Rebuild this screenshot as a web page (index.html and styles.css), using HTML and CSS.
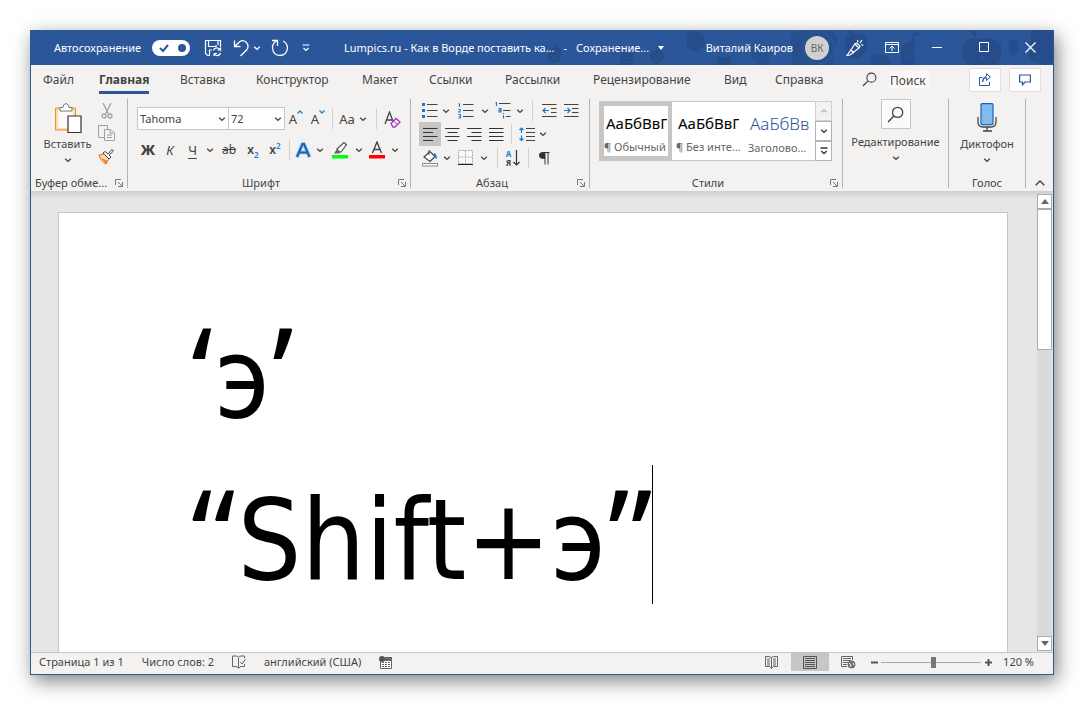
FILE: index.html
```html
<!DOCTYPE html>
<html lang="ru">
<head>
<meta charset="utf-8">
<title>Lumpics.ru - Word</title>
<link rel="stylesheet" href="styles.css">
</head>
<body>
<svg class="defs" width="0" height="0" aria-hidden="true">
  <symbol id="chev" viewBox="0 0 8 8"><path d="M1.2 2.8 4 5.4 6.8 2.8" fill="none" stroke="currentColor" stroke-width="1.4"/></symbol>
  <symbol id="launch" viewBox="0 0 8 8"><path d="M.5 6V.5H6M3 3l4 4M7.5 3v4.500H3" fill="none" stroke="currentColor"/></symbol>
  <symbol id="glass" viewBox="0 0 16 16"><circle cx="10" cy="6" r="4.800" fill="none" stroke="currentColor" stroke-width="1.200"/><path d="M6.500 9.500 1 15" stroke="currentColor" stroke-width="1.400"/></symbol>
</svg>
<div class="window">
  <header class="titlebar">
    <svg class="pattern" width="510" height="35" viewBox="544 30 510 35" aria-hidden="true">
      <g fill="#264d89">
        <path d="M654 50q4-4 10-1" fill="none"/>
        <path d="M552 50q4-4 10-1 2 10-3 13-5 2-9 0-4-6 2-12zM556 48l1-4 3-1-2 5zM622 52l13 2-2 11h-13z"/>
        <circle cx="658" cy="56" r="7"/><path d="M688 34l4-3 12 2 2 12-8 8-10-5zM718 57h14v8h-14z"/>
        <path d="M754 48q1-4 10-4 10 1 10 8-4 4-4 8-2 5-8 5-9-1-9-9z" opacity=".7"/>
        <path d="M793 34q5-4 15-3h22q10 2 8 12-2 5-4 7v15h-40q-2-10-1-16-3-8 0-15z" opacity=".8"/>
        <path d="M851 35q8-3 14 0 6 6 1 18-5 7-9 6-10 2-11-12-1-9 5-12zM857 34q-5-5-9-3 1 4 9 3z"/>
        <path d="M871 59q4-6 13-4 8 1 7 10h-19z"/>
        <path d="M902 46l13-3 1 22h-14zM905 43l12-3v3l-12 3zM912 42l3-10 8 2-1 2-5-1-3 7z"/>
        <path d="M964 44q4-7 17-5 16-3 21 5 2 15-4 21h-30q-6-9-4-21zM976 38q-1-5-8-8h7q3 4 3 8z"/>
        <path d="M1032 30h22v32l-9 3-15-5zM1009 42q5-5 10-1v12l-7 3z"/>
      </g>
      <g fill="none" stroke="#2b579a" stroke-width="1.300"><path d="M554 55v1m5-1v1m-4 2q2 1 3 0M625 58l3 1m2-1l3 1m-7 3h3M654 56h2m4 0h2m-6 3q2 2 4 0M976 52h3m9 0h3m-10 4q2 4 5 0M905 58l3-2m3 3l2-2"/><circle cx="819" cy="48" r="16"/><path d="M1035 51l3-3m4 6l3-2m-6 5l3 1"/></g>
    </svg>
    <label class="autosave"><span>Автосохранение</span>
      <span class="toggle"><input type="checkbox" checked>
        <svg width="38" height="16" viewBox="0 0 38 16"><path d="M8 8l3 3 5-6" fill="none" stroke="#2b579a" stroke-width="2"/><circle cx="30" cy="8" r="4" fill="#2b579a"/></svg></span>
    </label>
    <div class="quick">
      <button aria-label="Сохранить"><svg width="18" height="18" viewBox="0 0 18 18" fill="none" stroke="#fff" stroke-width="1.200"><path d="M6 16.500H3.500L1.500 14.500V1.500h15V8M4.500 2v5.500H12V6M14 2v4M5.500 16v-5H8M9.500 11.500q1-3 4-2.500 2 .5 3 2V8.500m0 2.500h-3M16.500 14q-1 3-4 2.500-2-.5-2.500-2V17m0-2.500h3"/></svg></button>
      <button aria-label="Отменить"><svg width="17" height="18" viewBox="0 0 17 18" fill="none" stroke="#fff" stroke-width="1.300"><path d="M2.500 1.500v6h6M2.500 7.500 8 2.500Q11 .5 14 3q3.500 3.500 1 7.500L8.500 17"/></svg></button>
      <button aria-label="Список отмены"><svg width="8" height="8"><use href="#chev"/></svg></button>
      <button aria-label="Повторить"><svg width="18" height="18" viewBox="0 0 18 18" fill="none" stroke="#fff" stroke-width="1.300"><path d="M1 1.500h5.500V7M6.500 1.500Q1 4 1.500 9.500 2.500 16.500 9 16.500q7-.5 7.500-7.500-.2-5-4.500-7"/></svg></button>
      <button aria-label="Настройка панели"><svg width="8" height="8" viewBox="0 0 8 8" fill="none" stroke="#fff" stroke-width="1.200"><path d="M.5 1h7M1.500 4 4 6.500 6.500 4"/></svg></button>
    </div>
    <button class="doctitle"><span>Lumpics.ru - Как в Ворде поставить ка...</span><span>-</span><span>Сохранение...</span><svg width="6" height="4"><path d="M0 0h6L3 4z" fill="#fff"/></svg></button>
    <div class="account"><span>Виталий Каиров</span><span class="avatar">ВК</span></div>
    <div class="sysbuttons">
      <button aria-label="Перо"><svg width="18" height="18" viewBox="0 0 18 18" fill="none" stroke="#fff" stroke-width="1.200"><path d="M1 16.500 9 5l4 4-9 7-3 .5zM5 11l3 3M9 5l2-1 3 3-1 2M12 3l-.5-2M14 4l2-3M15 6l2.500 0"/></svg></button>
      <button aria-label="Параметры ленты"><svg width="14" height="12" viewBox="0 0 14 12" fill="none" stroke="#fff"><path d="M.5.5h13v10H.5zM.5 2.500h13M7 9V4.500M4.500 6.500 7 4l2.500 2.500"/></svg></button>
      <button aria-label="Свернуть"><svg width="11" height="11" viewBox="0 0 11 11"><path d="M0 5.500h10" stroke="#fff"/></svg></button>
      <button aria-label="Развернуть"><svg width="11" height="11" viewBox="0 0 11 11"><path d="M.5.5h9v9h-9z" fill="none" stroke="#fff"/></svg></button>
      <button aria-label="Закрыть"><svg width="11" height="11" viewBox="0 0 11 11"><path d="M.5.5l10 10m0-10-10 10" stroke="#fff" stroke-width="1.200"/></svg></button>
    </div>
  </header>

  <nav class="tabs">
    <div class="tablist">
      <button>Файл</button><button class="active">Главная</button><button>Вставка</button><button>Конструктор</button><button>Макет</button><button>Ссылки</button><button>Рассылки</button><button>Рецензирование</button><button>Вид</button><button>Справка</button>
    </div>
    <label class="search"><svg width="15" height="15"><use href="#glass"/></svg><input type="text" value="Поиск" aria-label="Поиск"></label>
    <div class="share">
      <button aria-label="Поделиться"><svg width="12" height="13" viewBox="0 0 12 13" fill="none" stroke="#2b579a"><path d="M3.500 4.500h-3v8h10V9M3.500 9q0-4 4-4.500V7.500l4-3.500-4-3.200V3q-4 1-4 6z"/></svg></button>
      <button aria-label="Примечания"><svg width="12" height="12" viewBox="0 0 12 12" fill="none" stroke="#2b579a" stroke-width="1.200"><path d="M.6 1h10.800v7H6l-2.500 2.800V8H.6z"/></svg></button>
    </div>
  </nav>

  <section class="ribbon">
    <div class="group g-clip">
      <div class="body clip">
        <button class="big">
          <svg width="28" height="30" viewBox="0 0 28 30"><path d="M1.500 5h20v22h-20z" fill="#f9dfa6" stroke="#e8912d"/><path d="M4 7h15v18H4z" fill="#fafafa"/><path d="M6 8V4.500h3q0-3.500 3-4 2.500.5 3 4h3V8z" fill="#fff" stroke="#777"/><path d="M14 13h13v16.500H14z" fill="#fff" stroke="#333" stroke-width="1.200"/></svg>
          <span>Вставить</span><svg width="8" height="8"><use href="#chev"/></svg>
        </button>
        <div class="clipside">
          <button aria-label="Вырезать"><svg width="12" height="16" viewBox="0 0 12 16" fill="none" stroke="#a3a3a3" stroke-width="1.300"><path d="M2 0l5.500 11M10 0 4.500 11"/><circle cx="3" cy="13" r="2"/><circle cx="9" cy="13" r="2"/></svg></button>
          <button aria-label="Копировать"><svg width="17" height="16" viewBox="0 0 17 16" fill="#f3f2f1" stroke="#a0a0a0"><path d="M.5.500h9v12h-9z"/><path d="M6.500 4.500h6l4 3.500v7.500h-10z"/><path d="M12 4.500V8h4M9 10h5M9 12.500h5"/></svg></button>
          <button aria-label="Формат по образцу"><svg width="17" height="16" viewBox="0 0 17 16"><path d="M1 6l5-1 5 5-3 5q-5-2-7-9z" fill="#fbd9a5" stroke="#e8741e"/><path d="M3 9l7 3-2 3z" fill="#ee8434"/><path d="M5 4l6 6 2-2-2-2 4.500-4-1.500-1.500L10 5 7 2.500z" fill="#fff" stroke="#444"/></svg></button>
        </div>
      </div>
      <div class="caption"><span>Буфер обме...</span><button aria-label="Параметры буфера"><svg width="8" height="8"><use href="#launch"/></svg></button></div>
    </div>

    <div class="group g-font">
      <div class="body">
        <div class="row font1">
          <span class="combo"><select aria-label="Шрифт"><option>Tahoma</option></select><svg width="8" height="8"><use href="#chev"/></svg></span>
          <span class="combo"><select aria-label="Размер"><option>72</option></select><svg width="8" height="8"><use href="#chev"/></svg></span>
          <button class="ltr" aria-label="Увеличить размер">A<svg width="6" height="4" viewBox="0 0 6 4"><path d="M.5 3.500 3 1l2.500 2.500" fill="none" stroke="#1e86c8" stroke-width="1.300"/></svg></button>
          <button class="ltr" aria-label="Уменьшить размер">A<svg width="6" height="4" viewBox="0 0 6 4"><path d="M.5.500 3 3 5.500.5" fill="none" stroke="#1e86c8" stroke-width="1.300"/></svg></button>
          <i class="sep"></i>
          <button class="ltr">Aa</button><button aria-label="Список регистра"><svg width="8" height="8"><use href="#chev"/></svg></button>
          <i class="sep"></i>
          <button aria-label="Очистить формат"><svg width="17" height="17" viewBox="0 0 17 17" fill="none"><path d="M1 13 5.500 1 10 13M2.800 9H8" stroke="#444" stroke-width="1.300"/><path d="M7 12.500l5-5 4 3.500-5 5H9z" fill="#f6ecf8" stroke="#a33cb0" stroke-width="1.300"/><path d="M9.500 10l4 3.500" stroke="#a33cb0"/></svg></button>
        </div>
        <div class="row font2">
          <button class="bold">Ж</button><button class="ital">К</button><button class="under">Ч</button><button aria-label="Вид подчёркивания"><svg width="8" height="8"><use href="#chev"/></svg></button>
          <button class="strike">ab</button><button class="idx">x<sub>2</sub></button><button class="idx">x<sup>2</sup></button><i class="sep"></i>
          <button aria-label="Текстовые эффекты"><svg width="17" height="17" viewBox="0 0 17 17" fill="none"><path d="M2 15 7.500 2h1.500L14.500 15M4.500 10.500h7.500" stroke="#9ccbf0" stroke-width="4"/><path d="M2 15 7.500 2h1.500L14.500 15M4.500 10.500h7.500" stroke="#1465b0" stroke-width="2"/></svg></button>
          <button aria-label="Список эффектов"><svg width="8" height="8"><use href="#chev"/></svg></button>
          <button aria-label="Цвет выделения"><svg width="16" height="18" viewBox="0 0 16 18"><path d="M5 8l7-6.500 2.500 2L9 11H6z" fill="#fff" stroke="#555" stroke-width="1.200"/><path d="M5 8l4 3-2 1.500H2z" fill="#666"/><path d="M0 14h16v3.500H0z" fill="#0f0"/></svg></button>
          <button aria-label="Список цветов выделения"><svg width="8" height="8"><use href="#chev"/></svg></button>
          <button aria-label="Цвет текста"><svg width="16" height="18" viewBox="0 0 16 18"><path d="M3.500 12 8 1l4.500 11M5 8.500h6" fill="none" stroke="#444" stroke-width="1.400"/><path d="M0 14h16v3.500H0z" fill="red"/></svg></button>
          <button aria-label="Список цветов текста"><svg width="8" height="8"><use href="#chev"/></svg></button>
        </div>
      </div>
      <div class="caption"><span>Шрифт</span><button aria-label="Параметры шрифта"><svg width="8" height="8"><use href="#launch"/></svg></button></div>
    </div>

    <div class="group g-par">
      <div class="body">
        <div class="row par1">
          <button aria-label="Маркеры"><svg width="16" height="16" viewBox="0 0 16 16"><path d="M0 0h3v3H0zM0 6h3v3H0zM0 12h3v3H0z" fill="#1e78c8"/><path d="M5 1.500h10.500M5 7.500h10.500M5 13.500h10.500" stroke="#444"/></svg></button>
          <button aria-label="Список маркеров"><svg width="8" height="8"><use href="#chev"/></svg></button>
          <button aria-label="Нумерация"><svg width="16" height="16" viewBox="0 0 16 16"><path d="M.5 1l1-.5V4M.3 6.500h2v1.200l-2 1.300h2.500M.3 11.500h2.200v3.500H.3M1 13.300h1.500" fill="none" stroke="#1e78c8"/><path d="M5 1.500h10.500M5 7.500h10.500M5 13.500h10.500" stroke="#444"/></svg></button>
          <button aria-label="Список нумерации"><svg width="8" height="8"><use href="#chev"/></svg></button>
          <button aria-label="Многоуровневый список"><svg width="16" height="17" viewBox="0 0 16 17"><path d="M.5 1l1-.5V4M3.500 6.500H6v3.500H4V8.200h2M8.500 11v1M8.500 13v3.500" fill="none" stroke="#1e78c8" stroke-width="1.200"/><path d="M4 1.500h11.500M8 8.500h7.500M11 14.500h4.500" stroke="#444"/></svg></button>
          <button aria-label="Список уровней"><svg width="8" height="8"><use href="#chev"/></svg></button>
          <i class="sep"></i>
          <button aria-label="Уменьшить отступ"><svg width="15" height="14" viewBox="0 0 15 14" fill="none"><path d="M0 .5h14.500M9 4.500h5.500M9 8.500h5.500M0 12.500h14.500" stroke="#444"/><path d="M7 6.500H1M3.500 4 1 6.500 3.500 9" stroke="#1e78c8" stroke-width="1.200"/></svg></button>
          <button aria-label="Увеличить отступ"><svg width="15" height="14" viewBox="0 0 15 14" fill="none"><path d="M0 .5h14.500M8 4.500h6.500M8 8.500h6.500M0 12.500h14.500" stroke="#444"/><path d="M0 6.500h6M3.500 4 6 6.500 3.500 9" stroke="#1e78c8" stroke-width="1.200"/></svg></button>
        </div>
        <div class="row par2">
          <button class="on" aria-label="По левому краю"><svg width="15" height="13" viewBox="0 0 15 13"><path d="M0 .5h14.500M0 4.500h10M0 8.500h14.500M0 12.500h10" stroke="#333"/></svg></button>
          <button aria-label="По центру"><svg width="15" height="13" viewBox="0 0 15 13"><path d="M0 .5h14.500M2.500 4.500h10M0 8.500h14.500M2.500 12.500h10" stroke="#333"/></svg></button>
          <button aria-label="По правому краю"><svg width="15" height="13" viewBox="0 0 15 13"><path d="M0 .5h14.500M4.500 4.500h10M0 8.500h14.500M4.500 12.500h10" stroke="#333"/></svg></button>
          <button aria-label="По ширине"><svg width="15" height="13" viewBox="0 0 15 13"><path d="M0 .5h14.500M0 4.500h14.500M0 8.500h14.500M0 12.500h14.500" stroke="#333"/></svg></button>
          <i class="sep"></i>
          <button aria-label="Интервал"><svg width="16" height="15" viewBox="0 0 16 15" fill="none"><path d="M7 1.500h9M7 5.500h9M7 9.500h9M7 13.500h9" stroke="#444"/><path d="M2.500 1v5M.5 3 2.500 1l2 2M2.500 8.500v5M.5 11.500l2 2 2-2" stroke="#1e78c8" stroke-width="1.200"/></svg></button>
          <button aria-label="Список интервалов"><svg width="8" height="8"><use href="#chev"/></svg></button>
        </div>
        <div class="row par3">
          <button aria-label="Заливка"><svg width="17" height="17" viewBox="0 0 17 17"><path d="M2 7l6-5.500 5 5L8 11.500z" fill="#fff" stroke="#444" stroke-width="1.200"/><path d="M7 0v5" stroke="#444"/><path d="M11 3q4 0 4 6-3-1-3-5z" fill="#1e78c8"/><path d="M.5 13.500h15V16H.5z" fill="#fff" stroke="#888"/></svg></button>
          <button aria-label="Список заливок"><svg width="8" height="8"><use href="#chev"/></svg></button>
          <button aria-label="Границы"><svg width="16" height="16" viewBox="0 0 16 16"><path d="M.5.5h14v13H.5zM7.500.5v13M.5 7h14" fill="#fafafa" stroke="#aaa" stroke-dasharray="2 1"/><path d="M0 14.500h15" stroke="#222"/></svg></button>
          <button aria-label="Список границ"><svg width="8" height="8"><use href="#chev"/></svg></button>
          <i class="sep"></i>
          <button class="sort" aria-label="Сортировка"><span><b>А</b><b>Я</b></span><svg width="7" height="16" viewBox="0 0 7 16"><path d="M3.500 0v15M.5 12l3 3 3-3" fill="none" stroke="#333" stroke-width="1.200"/></svg></button>
          <i class="sep"></i>
          <button aria-label="Знаки абзаца"><svg width="11" height="13" viewBox="0 0 11 13"><path d="M4 0h6.500v1H9.500v11.500h-1V1H6.500v11.500h-1V7Q0 7 0 3.500 0 0 4 0z" fill="#333"/></svg></button>
        </div>
      </div>
      <div class="caption"><span>Абзац</span><button aria-label="Параметры абзаца"><svg width="8" height="8"><use href="#launch"/></svg></button></div>
    </div>

    <div class="group g-styles">
      <div class="body">
        <div class="gallery">
          <button class="style sel"><span class="sample">АаБбВвГ</span><span class="sname">¶ Обычный</span></button>
          <button class="style"><span class="sample">АаБбВвГ</span><span class="sname">¶ Без инте...</span></button>
          <button class="style head"><span class="sample">АаБбВв</span><span class="sname">Заголово...</span></button>
          <div class="gscroll">
            <button class="off" aria-label="Вверх"><svg width="8" height="8" viewBox="0 0 8 8"><path d="M1.200 5.400 4 2.800l2.800 2.600" fill="none" stroke="#aaa" stroke-width="1.200"/></svg></button>
            <button aria-label="Вниз"><svg width="8" height="8"><use href="#chev"/></svg></button>
            <button aria-label="Все стили"><svg width="8" height="8" viewBox="0 0 8 8"><path d="M.5 1h7M1.200 4 4 6.600 6.800 4" fill="none" stroke="#333" stroke-width="1.300"/></svg></button>
          </div>
        </div>
      </div>
      <div class="caption"><span>Стили</span><button aria-label="Параметры стилей"><svg width="8" height="8"><use href="#launch"/></svg></button></div>
    </div>

    <div class="group g-edit">
      <button class="big find"><span class="findbox"><svg width="17" height="17"><use href="#glass"/></svg></span><span>Редактирование</span><svg width="8" height="8"><use href="#chev"/></svg></button>
    </div>

    <div class="group g-voice">
      <div class="body">
        <button class="big">
          <svg width="20" height="30" viewBox="0 0 20 30"><path d="M1 14v5q0 5 5 5h8q5 0 5-5v-5M10 24v4M6 28h9" fill="none" stroke="#444" stroke-width="1.300"/><rect x="4" y=".6" width="12" height="21" rx="1" fill="#83bbec" stroke="#1467b8" stroke-width="1.200"/></svg>
          <span>Диктофон</span><svg width="8" height="8"><use href="#chev"/></svg></button>
      </div>
      <div class="caption"><span>Голос</span></div>
    </div>
    <button class="collapse" aria-label="Свернуть ленту"><svg width="10" height="6" viewBox="0 0 10 6"><path d="M.7 5.300 5 1l4.300 4.300" fill="none" stroke="#444" stroke-width="1.400"/></svg></button>
  </section>

  <main class="workspace">
    <article class="page">
      <p><span class="quote">‘</span>э<span class="quote">’</span></p>
      <p><span class="typed"><span class="quote">“</span>Shift+э<span class="quote">”</span></span></p>
    </article>
    <div class="scrollbar">
      <button aria-label="Прокрутить вверх"><svg width="8" height="5"><path d="M0 5h8L4 0z" fill="#666"/></svg></button>
      <div class="thumb"></div>
      <button class="down" aria-label="Прокрутить вниз"><svg width="8" height="5"><path d="M0 0h8L4 5z" fill="#666"/></svg></button>
    </div>
  </main>

  <footer class="status">
    <span>Страница 1 из 1</span><span>Число слов: 2</span>
    <svg width="14" height="14" viewBox="0 0 14 14" fill="none" stroke="#666"><path d="M6.500 13V2.500Q6 1 4 1H.5v10.500H4l2.500 1.500 2.500-1.500h3.500V9M6.500 2.500Q7 1 9 1h3.500v2M8.500 7l1.500 2 3.500-5"/></svg>
    <span>английский (США)</span>
    <svg width="13" height="13" viewBox="0 0 13 13"><path d="M1.500 4v8.500h11v-11H6M1.500 4.500h11" fill="#fff" stroke="#666"/><path d="M6 1h7v3.500H4z" fill="#666"/><path d="M3 6.500h8.500M3 8.500h8.500M3 10.500h8.500" stroke="#666" stroke-dasharray="2 1"/><circle cx="3" cy="3" r="3" fill="#555"/></svg>
    <div class="views">
      <button aria-label="Режим чтения"><svg width="14" height="13" viewBox="0 0 14 13" fill="none" stroke="#666"><path d="M6.500 1.500 4.500.5h-4v10h4l2 1.500 2-1.500h4V.5h-4zM6.500 1v12M2 3h3M2 5h3M2 7h3M2 9h3M8 3h3M8 5h3M8 7h3M8 9h3"/></svg></button>
      <button class="on" aria-label="Разметка страницы"><svg width="14" height="13" viewBox="0 0 14 13" fill="none" stroke="#555"><path d="M.5.5h13v12H.5zM2 2.500h10M2 4.500h10M2 6.500h10M2 8.500h10M2 10.500h10"/></svg></button>
      <button aria-label="Веб-документ"><svg width="15" height="13" viewBox="0 0 15 13" fill="none" stroke="#666"><path d="M6 10.500H.5V.5h11V4M2 2.500h8M2 4.500h8M2 6.500h5M2 8.500h4"/><circle cx="10.500" cy="8.500" r="3.500" fill="#777"/><path d="M8 7l2 2-1 2m3-4 1 2" stroke="#eee"/></svg></button>
    </div>
    <div class="zoom">
      <button aria-label="Уменьшить"><svg width="7" height="7"><path d="M0 3.500h7" stroke="#555" stroke-width="2"/></svg></button>
      <input type="range" min="0" max="100" value="53" aria-label="Масштаб">
      <button aria-label="Увеличить"><svg width="7" height="7"><path d="M0 3.500h7M3.500 0v7" stroke="#555" stroke-width="2"/></svg></button>
      <span>120 %</span>
    </div>
  </footer>
</div>
</body>
</html>
```

FILE: styles.css
```css
* { box-sizing: border-box; }
body {
  margin: 0;
  padding: 30px;
  min-height: 100vh;
  display: flex;
  background: #fff;
  color: #444;
  font: 11px/16px "Noto Sans", "Open Sans", sans-serif;
}
.defs { position: absolute; }
button, input, select { font: inherit; color: inherit; border: 0; padding: 0; margin: 0; background: none; }
button { display: flex; align-items: center; justify-content: center; }
svg { flex: none; display: block; }
.window {
  flex: 1;
  min-width: 0;
  display: flex;
  flex-direction: column;
  background: #f3f2f1;
  border: 1px solid #2b579a;
  border-top: 0;
  box-shadow: 3px 6px 18px rgba(0, 0, 0, .5);
}

/* Title bar */
.titlebar {
  position: relative;
  display: flex;
  align-items: center;
  height: 35px;
  padding-left: 23px;
  background: #2b579a;
  color: #fff;
}
.titlebar > * { position: relative; }
.titlebar .pattern { position: absolute; right: 0; top: 0; }
.autosave { display: flex; align-items: center; gap: 7px; width: 136px; justify-content: space-between; }
.toggle { display: grid; background: #fff; border-radius: 8px; }
.toggle > * { grid-area: 1 / 1; }
.toggle input { opacity: 0; width: 38px; height: 16px; }
.quick { display: grid; grid-template-columns: 28px 21px 18px 31px 8px; align-items: center; margin-left: 14px; }
.quick button { justify-content: flex-start; }
.doctitle { gap: 9px; margin-left: 34px; white-space: nowrap; }
.account { display: flex; align-items: center; gap: 12px; margin-left: auto; white-space: nowrap; }
.avatar { width: 24px; height: 24px; border-radius: 50%; background: #d2d0ce; color: #666; line-height: 24px; text-align: center; font-size: 10px; }
.sysbuttons { display: grid; grid-template-columns: 52px 21px 70px 24px 57px; height: 35px; }
.sysbuttons button:last-child { padding-left: 11px; }

/* Tab row */
.tabs { display: flex; align-items: center; height: 29px; padding: 0 12px; font-size: 12px; }
.tablist { display: grid; grid-template-columns: 56px 81px 76px 106px 67px 76px 88px 131px 51px 50px; justify-items: start; height: 28px; }
.tablist button { border: solid transparent; border-width: 4px 0 3px; white-space: nowrap; }
.tablist .active { font-weight: 700; border-bottom-color: #2b579a; }
.search { display: flex; align-items: center; gap: 12px; margin-left: 37px; }
.search input { width: 40px; height: 17px; background: #faf9f8; padding: 1px 0 0 1px; }
.share { display: flex; gap: 8px; margin-left: auto; }
.share button { width: 32px; height: 24px; background: #fff; border: 1px solid #e1dfdd; border-radius: 2px; }

/* Ribbon */
.ribbon { display: flex; height: 97px; padding: 5px 0 3px; }
.group { flex: none; display: flex; flex-direction: column; border-right: 1px solid #b5b3b1; }
.g-clip { width: 97px; }
.g-font { width: 283px; }
.g-par { width: 179px; }
.g-styles { width: 253px; }
.g-edit { width: 106px; }
.g-voice { width: 77px; }
.body { flex: 1; }
.caption { display: grid; grid-template-columns: 1fr 16px; height: 10px; align-items: center; text-align: center; white-space: nowrap; line-height: 10px; }
.caption button { color: #777; }
.g-clip .caption { padding-left: 4px; text-align: left; }
.g-voice .caption { grid-template-columns: 1fr; }
.big { flex-direction: column; white-space: nowrap; width: 100%; }
.big > span { line-height: 18px; }
.big > svg:last-child { margin-top: 3px; }
.clip { display: flex; padding: 3px 11px 0; }
.clip .big { width: 51px; padding-top: 1px; }
.g-clip .big, .g-voice .big { justify-content: flex-start; }
.g-voice .big { padding-top: 4px; }
.clip .big > span, .g-voice .big > span { margin-top: 2px; }
.clipside { display: grid; grid-template-rows: 18px 26px 22px; margin-left: 5px; width: 17px; }
.row { display: grid; height: 24px; }
.sep { width: 1px; height: 20px; background: #d0cecc; place-self: center; }
.g-font .body { padding: 8px 0 0 9px; }
.g-font .row { margin-bottom: 7px; }
.font1 { grid-template-columns: 91px 56px 24px 20px 8px 22px 10px 16px 16px; }
.font2 { grid-template-columns: 22px 22px 23px 11px 28px 20px 24px 4px 25px 8px 32px 6px 29px 8px; font-size: 13px; }
.combo { display: flex; align-items: center; height: 23px; background: #fff; border: 1px solid #c8c6c4; padding-right: 2px; margin-right: -1px; }
.combo select { appearance: none; flex: 1; min-width: 0; height: 21px; padding-left: 2px; }
.ltr { font-size: 13px; }
.ltr svg { align-self: flex-start; margin-top: 3px; }
.bold { font-weight: 800; font-size: 14px; }
.ital { font-style: italic; }
.under { text-decoration: underline; text-underline-offset: 3px; }
.strike { text-decoration: line-through; font-size: 12px; }
.idx { font-weight: 600; font-size: 12px; height: 17px; align-self: center; }
.idx sub, .idx sup { font-size: 8px; line-height: 8px; color: #1e78c8; }
.idx sub { align-self: flex-end; }
.idx sup { align-self: flex-start; }
.g-par .body { padding-left: 8px; }
.par1 { grid-template-columns: 22px 10px 30px 8px 28px 6px 19px 14px 30px; height: 23px; }
.par2 { grid-template-columns: 22px 22px 22px 22px 9px 22px 9px; }
.par3 { grid-template-columns: 22px 12px 26px 10px 16px 16px 14px 18px; }
.par2 .on { background: #c8c6c4; }
.sort { gap: 2px; }
.sort span { display: grid; }
.sort b { font-size: 8px; line-height: 9px; }
.sort b:first-child { color: #1e78c8; }
.g-styles .body { padding: 2px 10px 0 9px; }
.gallery { display: grid; grid-template-columns: 1fr 1fr 1fr 15px; height: 60px; background: #fff; border: 1px solid #c8c6c4; }
.style { flex-direction: column; justify-content: space-between; align-items: stretch; min-width: 0; padding: 6px 0 0; border: 4px solid transparent; text-align: left; white-space: nowrap; }
.style.sel { border-color: #c6c6c6; }
.sample { margin: 0 1px 0 2px; overflow: hidden; color: #000; font-size: 15px; line-height: 22px; }
.head .sample { color: #2f5496; font-size: 17px; font-weight: 300; line-height: 24px; }
.sname { line-height: 18px; color: #666; }
.head .sname { line-height: 16px; }
.gscroll { display: grid; grid-template-rows: 1fr 1fr 1fr; margin: -1px; }
.gscroll button { border: 1px solid #b5b3b1; background: #fff; color: #333; }
.gscroll .off { background: #f3f2f1; border-color: #d2d0ce; }
.find > .findbox { display: grid; place-items: center; width: 30px; height: 30px; background: #fafafa; border: 1px solid #c8c6c4; margin-bottom: 4px; }
.g-edit .big { padding-bottom: 1px; }
.collapse { flex: 1; align-self: flex-end; height: 10px; }

/* Document area */
.workspace { flex: 1; display: flex; padding: 3px 1px 0 27px; background: linear-gradient(#cfcfcf, #e6e6e6 8px); }
.page { flex: 1; min-width: 0; margin: 18px 29px 0 0; padding: 90px 130px 36px; background: #fff; border: 1px solid #c6c6c6; border-bottom: 0; color: #000; }
.page p { margin: 0 0 11px; height: 151px; font: 112px/151px "DejaVu Sans Condensed", "DejaVu Sans", sans-serif; white-space: nowrap; }
.page p:last-child { margin-bottom: 0; }
.quote { padding: 0 2px; font-family: "Noto Sans", sans-serif; font-size: 124px; line-height: 1; }
.typed { position: relative; display: inline-block; }
.typed::after { content: ""; position: absolute; right: 2px; top: 0; width: 1px; height: 139px; background: #000; }
.scrollbar { display: flex; flex-direction: column; width: 15px; background: #dadada; margin-bottom: 1px; }
.scrollbar button { height: 15px; background: #fff; border: 1px solid #ababab; }
.scrollbar .thumb { height: 141px; background: #fff; border: 1px solid #ababab; }
.scrollbar .down { margin-top: auto; }

/* Status bar */
.status { display: flex; align-items: center; height: 22px; padding: 0 0 3px 8px; border-top: 1px solid #c8c6c4; white-space: nowrap; gap: 18px; }
.views { display: flex; align-self: stretch; margin-left: auto; }
.views button { width: 38px; }
.views .on { background: #c8c6c4; }
.zoom { display: flex; align-items: center; margin: 0 19px 0 -14px; }
.zoom span { margin-left: 11px; }
.zoom input { appearance: none; width: 100px; height: 12px; margin: 0 4px 0 3px; background: linear-gradient(#aaa, #aaa) center / 100% 1px no-repeat; }
.zoom input::-webkit-slider-thumb { appearance: none; width: 5px; height: 11px; background: #777; }
```
